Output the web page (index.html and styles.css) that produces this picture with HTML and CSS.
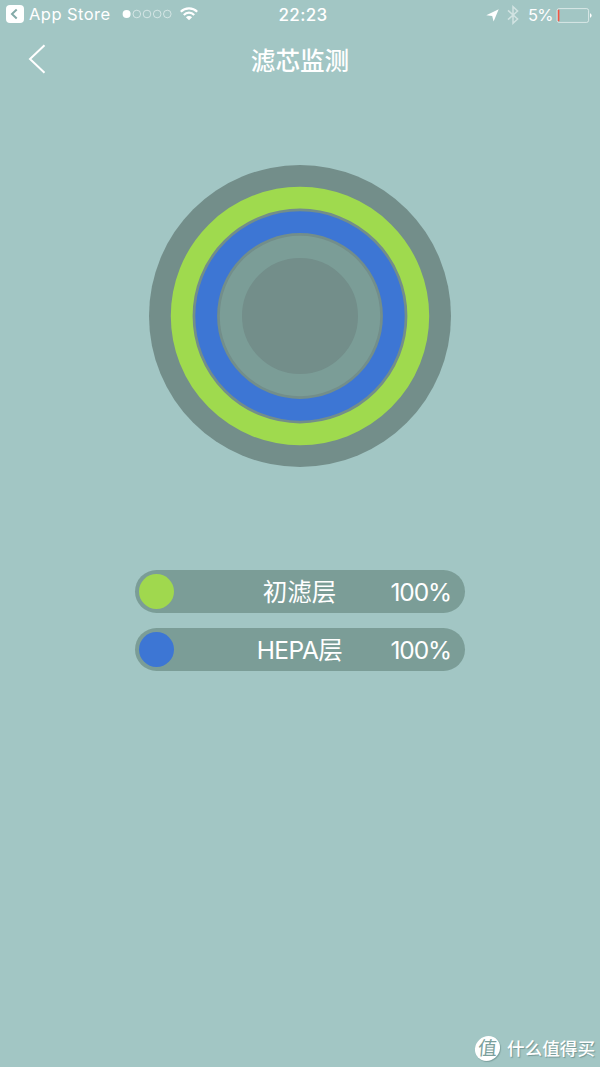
FILE: index.html
```
<!DOCTYPE html>
<html lang="zh-CN">
    <head>
        <meta charset="UTF-8">
        <title>滤芯监测</title>
        <link rel="stylesheet" href="styles.css">
    </head>
    <body>
        <div class="status">
            <div class="status-left">
                <svg class="app-back" width="18" height="18" viewBox="0 0 18 18">
                    <rect width="18" height="18" rx="4" fill="#fff"/>
                    <path d="M10.7 4.6L6 9l4.7 4.4" fill="none" stroke="#83aaa8" stroke-width="2"/>
                </svg>
                <span class="app-name">App Store</span>
                <svg class="signal" width="50" height="10" viewBox="0 0 50 10">
                    <circle cx="4.6" cy="5" r="4" fill="#fff"/>
                    <g fill="none" stroke="#fff" stroke-opacity=".6" stroke-width=".9">
                        <circle cx="14.8" cy="5" r="3.8"/>
                        <circle cx="25" cy="5" r="3.8"/>
                        <circle cx="35.2" cy="5" r="3.8"/>
                        <circle cx="45.3" cy="5" r="3.8"/>
                    </g>
                </svg>
                <svg class="wifi" width="18" height="14" viewBox="0 0 18 14">
                    <g fill="none" stroke="#fff" stroke-width="2.2">
                        <path d="M.8 4.8a11.6 11.6 0 0 1 16.4 0"/>
                        <path d="M3.8 7.9a7.3 7.3 0 0 1 10.4 0"/>
                    </g>
                    <path d="M5.9 10.2a4.4 4.4 0 0 1 6.2 0L9 13.3z" fill="#fff"/>
                </svg>
            </div>
            <div class="time">22:23</div>
            <div class="status-right">
                <svg class="location" width="13" height="13" viewBox="0 0 13 13">
                    <path d="M12.7.2L7.6 12.5 6.2 7 .3 6.2z" fill="#fff"/>
                </svg>
                <svg class="bluetooth" width="12" height="20" viewBox="0 0 12 20">
                    <path d="M1 5.4l9.6 8.6L6 18.3V1.7L10.6 6 1 14.6" fill="none" stroke="#fff" stroke-opacity=".5" stroke-width="1.5"/>
                </svg>
                <span class="percent">5%</span>
                <svg class="battery" width="36" height="15" viewBox="0 0 36 15">
                    <rect x="1.1" y=".6" width="31.5" height="13.8" rx="2" fill="none" stroke="#fff" stroke-opacity=".6"/>
                    <rect x="1.8" y="1.7" width="1.6" height="11.6" fill="#f25643"/>
                    <path d="M34 5.2q1.6.6 1.6 2.3T34 9.8z" fill="#fff"/>
                </svg>
            </div>
        </div>

        <div class="header">
            <svg class="back" width="18" height="30" viewBox="0 0 18 30">
                <path d="M16.5 1.2L2 15l14.5 13.8" fill="none" stroke="#fff" stroke-width="2"/>
            </svg>
            <h1>滤芯监测</h1>
        </div>

        <svg class="rings" width="302" height="302" viewBox="0 0 302 302">
            <circle cx="151" cy="151" r="151" fill="#738e8a"/>
            <circle cx="151" cy="151" r="118.3" fill="none" stroke="#9fda4e" stroke-width="21.8"/>
            <circle cx="151" cy="151" r="93.8" fill="none" stroke="#3d76d4" stroke-width="21.8"/>
            <circle cx="151" cy="151" r="69.1" fill="none" stroke="#7b9d97" stroke-width="22.2"/>
        </svg>

        <ul class="list">
            <li>
                <i class="dot green"></i>
                <span class="name">初滤层</span>
                <span class="value">100%</span>
            </li>
            <li>
                <i class="dot blue"></i>
                <span class="name hepa">HEPA层</span>
                <span class="value">100%</span>
            </li>
        </ul>

        <div class="watermark">
            <span class="logo">值</span>
            <span class="brand">什么值得买</span>
        </div>
    </body>
</html>
```
FILE: styles.css
```
*{ margin:0; padding:0; box-sizing:border-box;}
body{
    display: flex;
    flex-direction: column;
    align-items: center;
    width: 600px;
    height: 1067px;
    overflow: hidden;
    background: #a2c6c4;
    color: #fff;
    font-family: Inter,"Noto Sans CJK SC",sans-serif;
}
svg{
    display: block;
    flex: none;
}
.status{
    display: grid;
    grid-template-columns: 1fr 60px 1fr;
    width: 100%;
    height: 30px;
    line-height: 30px;
    white-space: nowrap;
}
.status-left,.status-right{
    display: flex;
    align-items: center;
}
.status-left{
    height: 28px;
    padding-left: 6px;
}
.status-right{
    justify-content: flex-end;
    padding-right: 8px;
}
.app-back{
    margin-right: 5px;
}
.app-name{
    width: 93px;
    font-size: 16.5px;
    letter-spacing: .45px;
}
.wifi{
    margin-left: 8px;
}
.time{
    padding-left: 6px;
    text-align: center;
    font-size: 17px;
    font-weight: 500;
    letter-spacing: .4px;
}
.location{
    margin-right: 8px;
}
.bluetooth{
    margin-right: 9px;
}
.percent{
    width: 28px;
    font-size: 16.5px;
    letter-spacing: -.8px;
}
.header{
    display: grid;
    grid-template-columns: 60px 1fr 60px;
    align-items: center;
    width: 100%;
    height: 60px;
}
.back{
    margin: -3px 0 0 28px;
}
.header h1{
    padding-top: 2px;
    text-align: center;
    font-size: 24.6px;
    font-weight: 500;
    line-height: 58px;
}
.rings{
    margin-top: 75px;
}
.list{
    display: flex;
    flex-direction: column;
    gap: 15px;
    width: 330px;
    margin-top: 103px;
    list-style: none;
}
.list li{
    display: grid;
    grid-template-columns: 80px 1fr 80px;
    align-items: center;
    height: 43px;
    padding: 0 14px 0 4px;
    border-radius: 22px;
    background: #7b9d97;
    font-size: 24.5px;
    line-height: 41px;
}
.dot{
    width: 35px;
    height: 35px;
    border-radius: 50%;
}
.green{
    background: #a0d84e;
}
.blue{
    background: #3d76d4;
}
.name{
    padding: 2px 0 0 9px;
    text-align: center;
    white-space: nowrap;
}
.hepa{
    letter-spacing: -.5px;
}
.value{
    padding-top: 2px;
    text-align: right;
    letter-spacing: -1.1px;
}
.watermark{
    display: flex;
    align-items: center;
    align-self: flex-end;
    gap: 7px;
    margin: auto 5px 5px 0;
}
.logo{
    width: 25px;
    height: 25px;
    border-radius: 50%;
    background: #fff;
    box-shadow: 1px 1px 1px rgba(70,105,103,.4);
    color: #7b9f9c;
    text-align: center;
    font-size: 19px;
    font-weight: 400;
    line-height: 25px;
    transform: skewX(-5deg);
}
.brand{
    padding-top: 1px;
    font-size: 17.6px;
    font-weight: 500;
    line-height: 26px;
    text-shadow: 1px 1px 1px rgba(70,105,103,.5);
}
```
